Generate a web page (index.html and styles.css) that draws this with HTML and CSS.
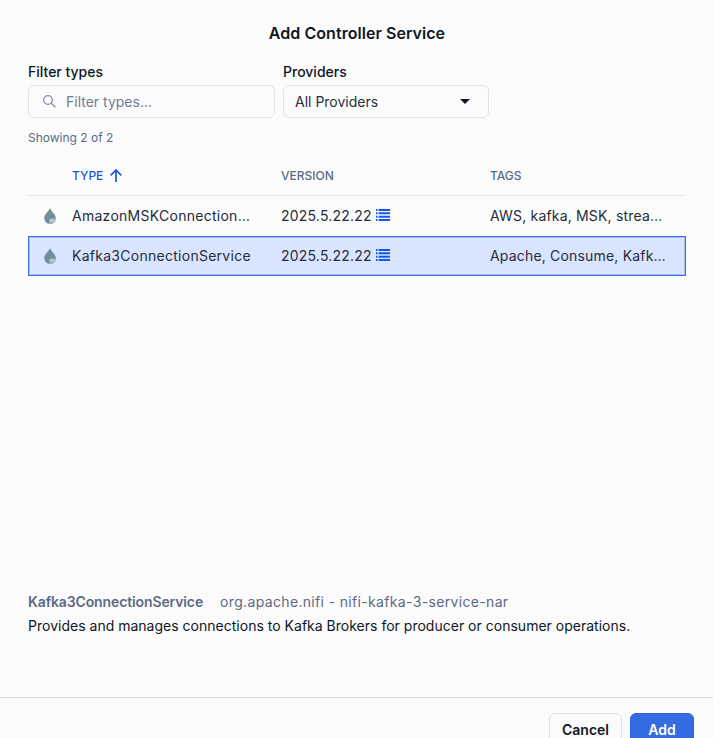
FILE: index.html
```html
<!DOCTYPE html>
<html lang="en">
<head>
<meta charset="utf-8">
<title>Add Controller Service</title>
<link rel="stylesheet" href="styles.css">
</head>
<body>
<svg class="symbols" aria-hidden="true">
  <symbol id="drop" viewBox="0 0 12 16">
    <path d="M6 0C5.300 2.700.2 6.300.2 10.200a5.600 5.600 0 0 0 5.800 5.600 5.600 5.600 0 0 0 5.800-5.600C11.800 6.300 6.700 2.700 6 0Z" fill="#728e9b"/>
    <path d="M5.500 10.500h6v1.200c0 2.300-2.200 4.300-4.800 4.300H5.500Z" fill="#a3b3bd"/>
    <path d="M7 11v3M9 10.500v4M5.500 12.500h5.500" stroke="#d2dbe0" stroke-width=".6"/>
  </symbol>
  <symbol id="list" viewBox="0 0 14 12">
    <path d="M0 1h1.500M0 4.300h1.500M0 7.700h1.500M0 11h1.500M2.600 1H14M2.600 4.300H14M2.600 7.700H14M2.600 11H14" stroke="#1259e8" stroke-width="2"/>
  </symbol>
</svg>
<main class="dialog">
  <h1 class="title">Add Controller Service</h1>
  <section class="content">
    <div class="filters">
      <div class="field field-search">
        <div class="label">Filter types</div>
        <div class="control search">
          <svg class="search-icon" viewBox="0 0 13 13"><circle cx="5" cy="5" r="4.300"/><path d="m8.200 8.200 4.200 4.100"/></svg>
          <span class="placeholder">Filter types...</span>
        </div>
      </div>
      <div class="field field-provider">
        <div class="label">Providers</div>
        <div class="control select"><span class="select-value">All Providers</span><svg class="caret" viewBox="0 0 10 5"><path d="M0 0h10L5 5Z"/></svg></div>
      </div>
    </div>
    <div class="count">Showing 2 of 2</div>
    <div class="table">
      <div class="row head">
        <span></span>
        <span class="sorted"><span>TYPE</span><svg class="arrow" viewBox="0 0 12 13"><path d="M6 13V1M.7 6.300 6 1l5.300 5.300"/></svg></span>
        <span>VERSION</span>
        <span>TAGS</span>
      </div>
      <div class="row">
        <svg class="drop"><use href="#drop"/></svg>
        <span class="type">AmazonMSKConnection…</span>
        <span class="version"><span>2025.5.22.22</span><svg class="list"><use href="#list"/></svg></span>
        <span class="tags">AWS, kafka, MSK, strea…</span>
      </div>
      <div class="row selected">
        <svg class="drop"><use href="#drop"/></svg>
        <span class="type">Kafka3ConnectionService</span>
        <span class="version"><span>2025.5.22.22</span><svg class="list"><use href="#list"/></svg></span>
        <span class="tags">Apache, Consume, Kafk…</span>
      </div>
    </div>
    <div class="details">
      <div class="source"><strong class="name">Kafka3ConnectionService</strong><span class="bundle">org.apache.nifi - nifi-kafka-3-service-nar</span></div>
      <p class="description"><span>Provides and manages connections to Kafka Brokers for producer or consumer operations.</span></p>
    </div>
  </section>
  <footer class="actions">
    <button class="button cancel">Cancel</button>
    <button class="button add">Add</button>
  </footer>
</main>
</body>
</html>
```
FILE: styles.css
```css
* { box-sizing: border-box; }
body { margin: 0; height: 738px; overflow: hidden; background: #fff; font-family: Inter, sans-serif; font-size: 14px; color: #0f1724; }
.symbols { display: none; }
.dialog { width: 713px; height: 738px; background: #fbfbfb; display: flex; flex-direction: column; overflow: hidden; }
.title { flex: none; margin: 0; padding: 23px 0 0 1px; height: 62px; font-size: 16px; line-height: 20px; font-weight: 600; letter-spacing: .05px; text-align: center; }
.content { height: 635px; flex: none; padding: 0 27px 0 28px; display: flex; flex-direction: column; }
.filters { display: flex; gap: 8px; }
.field-search { width: 247px; }
.field-provider { width: 206px; }
.label { height: 23px; line-height: 19px; font-weight: 500; }
.control { height: 33px; border: 1px solid #dfe2ec; border-radius: 6px; display: flex; align-items: center; }
.search { padding-left: 14px; }
.search-icon { width: 13px; height: 13px; margin-right: 10px; fill: none; stroke: #8590aa; stroke-width: 1.300; }
.placeholder { color: #717b94; }
.select { padding: 0 18px 0 11px; justify-content: space-between; color: #272f3d; }
.caret { width: 10px; height: 5px; fill: #0f1724; }
.count { margin-top: 12px; height: 16px; line-height: 16px; font-size: 12px; color: #5d6a85; }
.table { margin-top: 8px; }
.row { display: grid; grid-template-columns: 44px 209px 209px 1fr; height: 40px; padding-bottom: 1px; align-items: center; color: #252d3b; white-space: nowrap; }
.head { height: 42px; padding: 1px 0 0; font-size: 12px; font-weight: 500; color: #5d6a85; border-bottom: 1px solid #e5e6e8; }
.sorted, .version { display: flex; align-items: center; }
.sorted { color: #1b59db; }
.arrow { width: 12px; height: 13px; margin-left: 7px; fill: none; stroke: #1b59db; stroke-width: 1.700; }
.drop { width: 12px; height: 16px; margin-left: 16px; }
.type { letter-spacing: .27px; }
.tags { letter-spacing: .18px; }
.version { letter-spacing: .2px; }
.list { width: 14px; height: 12px; margin: 0 0 1px 4px; }
.selected { background: #d9e5fe; box-shadow: inset 0 0 0 1px #3c70df, inset 0 0 0 2px #a4bdf5; }
.details { margin-top: auto; height: 105px; }
.source { display: flex; height: 20px; line-height: 20px; color: #5d6a85; gap: 17px; letter-spacing: .34px; }
.name { font-weight: 600; letter-spacing: -.12px; }
.description { margin: 4px 0 0; line-height: 20px; letter-spacing: .01px; }
.actions { flex: none; height: 60px; border-top: 1px solid #d8d9e5; padding: 15px 19px 0 0; display: flex; justify-content: flex-end; gap: 8px; }
.button { height: 33px; padding: 0; border-radius: 6px; font: 600 14px/31px Inter, sans-serif; }
.cancel { width: 73px; border: 1px solid #dddfea; background: #fbfbfb; color: #0f1724; }
.add { width: 64px; border: 1px solid #2864df; background: #356be1; color: #fff; }
```
